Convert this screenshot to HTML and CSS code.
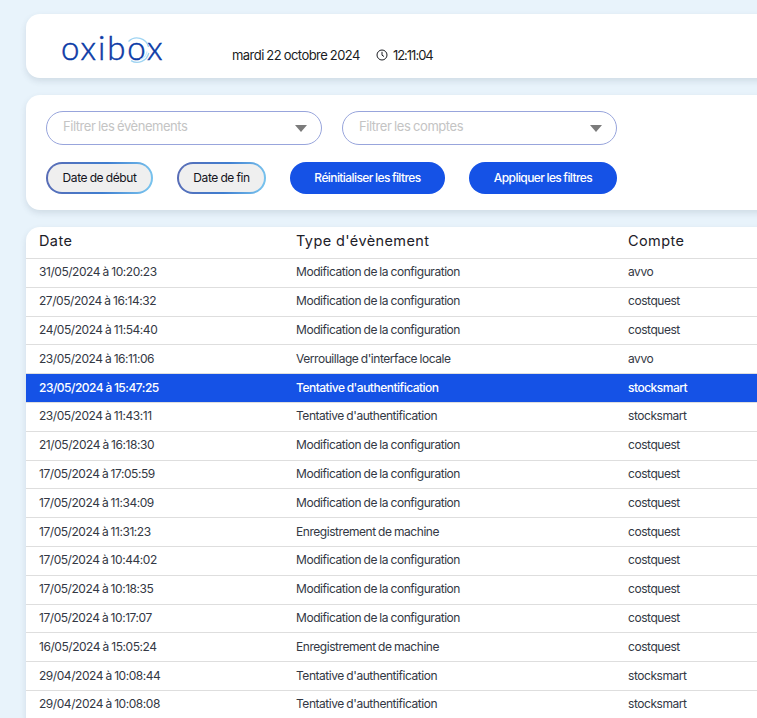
FILE: index.html
```html
<!DOCTYPE html>
<html lang="fr">
<head>
<meta charset="utf-8">
<title>Oxibox</title>
<link rel="stylesheet" href="styles.css">
</head>
<body>
<main class="page">
  <header class="card topbar">
    <div class="logo">
      <span class="logo-text">oxibox</span>
      <svg class="logo-waves" viewBox="0 0 34 34" width="34" height="34" aria-hidden="true">
        <path d="M8.500 8.500A12 12 0 0 1 28.600 14" />
        <path d="M28.800 20A12 12 0 0 1 11 27.600" />
        <path class="inner" d="M27 18.500A10 10 0 0 1 20 26.600" />
      </svg>
    </div>
    <span class="date">mardi 22 octobre 2024</span>
    <span class="time">
      <svg class="clock" viewBox="0 0 12 12" width="12" height="12" aria-hidden="true">
        <circle cx="6" cy="6" r="5" />
        <path d="M6 2.800V6.200L8 7.500" />
      </svg>
      12:11:04
    </span>
  </header>

  <section class="card filters">
    <div class="filter-row">
      <div class="select"><span>Filtrer les évènements</span><i class="caret"></i></div>
      <div class="select"><span>Filtrer les comptes</span><i class="caret"></i></div>
    </div>
    <div class="button-row">
      <button class="date-btn date-start">Date de début</button>
      <button class="date-btn date-end">Date de fin</button>
      <button class="primary reset">Réinitialiser les filtres</button>
      <button class="primary apply">Appliquer les filtres</button>
    </div>
  </section>

  <section class="card events">
    <div class="row head"><div>Date</div><div>Type d'évènement</div><div>Compte</div></div>
    <div class="row"><div>31/05/2024 à 10:20:23</div><div>Modification de la configuration</div><div>avvo</div></div>
    <div class="row"><div>27/05/2024 à 16:14:32</div><div>Modification de la configuration</div><div>costquest</div></div>
    <div class="row"><div>24/05/2024 à 11:54:40</div><div>Modification de la configuration</div><div>costquest</div></div>
    <div class="row"><div>23/05/2024 à 16:11:06</div><div>Verrouillage d'interface locale</div><div>avvo</div></div>
    <div class="row selected"><div>23/05/2024 à 15:47:25</div><div>Tentative d'authentification</div><div>stocksmart</div></div>
    <div class="row"><div>23/05/2024 à 11:43:11</div><div>Tentative d'authentification</div><div>stocksmart</div></div>
    <div class="row"><div>21/05/2024 à 16:18:30</div><div>Modification de la configuration</div><div>costquest</div></div>
    <div class="row"><div>17/05/2024 à 17:05:59</div><div>Modification de la configuration</div><div>costquest</div></div>
    <div class="row"><div>17/05/2024 à 11:34:09</div><div>Modification de la configuration</div><div>costquest</div></div>
    <div class="row"><div>17/05/2024 à 11:31:23</div><div>Enregistrement de machine</div><div>costquest</div></div>
    <div class="row"><div>17/05/2024 à 10:44:02</div><div>Modification de la configuration</div><div>costquest</div></div>
    <div class="row"><div>17/05/2024 à 10:18:35</div><div>Modification de la configuration</div><div>costquest</div></div>
    <div class="row"><div>17/05/2024 à 10:17:07</div><div>Modification de la configuration</div><div>costquest</div></div>
    <div class="row"><div>16/05/2024 à 15:05:24</div><div>Enregistrement de machine</div><div>costquest</div></div>
    <div class="row"><div>29/04/2024 à 10:08:44</div><div>Tentative d'authentification</div><div>stocksmart</div></div>
    <div class="row"><div>29/04/2024 à 10:08:08</div><div>Tentative d'authentification</div><div>stocksmart</div></div>
  </section>
</main>
</body>
</html>
```
FILE: styles.css
```css
html, body {
  margin: 0;
  height: 718px;
  overflow: hidden;
  background: #e8f3fb;
}
body {
  font-family: Inter, "Liberation Sans", sans-serif;
  color: #1f2430;
}
.page {
  width: 780px;
  padding: 14px 0 0 26px;
  display: flex;
  flex-direction: column;
  gap: 17px;
}
.card {
  background: #fff;
  border-radius: 14px;
  box-shadow: 0 3px 6px rgba(60, 80, 100, 0.14);
}
.topbar {
  height: 64px;
  display: flex;
  align-items: flex-start;
  box-sizing: border-box;
}
.logo {
  position: relative;
  margin: 13px 0 0 35px;
  width: 171px;
  height: 40px;
}
.logo-text {
  font-family: Lato, sans-serif;
  font-size: 33px;
  line-height: 40px;
  font-weight: 300;
  letter-spacing: 1.9px;
  color: #0a3aa6;
  -webkit-text-stroke: 0.5px #0a3aa6;
}
.logo-waves {
  position: absolute;
  left: 59px;
  top: 6px;
  fill: none;
  stroke: #9fd4f2;
  stroke-width: 1.3;
}
.logo-waves .inner { stroke: #cfe9f8; }
.date, .time {
  font-size: 13px;
  letter-spacing: -0.55px;
  word-spacing: -0.5px;
  line-height: 16px;
  color: #1a1c22;
  margin-top: 33px;
}
.time {
  margin-left: 16px;
  display: inline-flex;
  align-items: center;
  gap: 5px;
  letter-spacing: -1px;
}
.clock {
  fill: none;
  stroke: #1a1c22;
  stroke-width: 1;
}
.filters {
  height: 115px;
  box-sizing: border-box;
  padding: 16px 20px;
  display: flex;
  flex-direction: column;
  gap: 17px;
}
.filter-row, .button-row {
  display: flex;
  gap: 20px;
}
.select {
  width: 276px;
  height: 34px;
  box-sizing: border-box;
  border: 1px solid #98a5dc;
  border-radius: 17px;
  padding: 0 13px 0 16px;
  display: flex;
  align-items: center;
  justify-content: space-between;
  font-size: 13px;
  letter-spacing: -0.45px;
  word-spacing: -0.5px;
  color: #c4c4c4;
}
.select span { margin-top: -4px; }
.caret {
  width: 0;
  height: 0;
  border-left: 6px solid transparent;
  border-right: 6px solid transparent;
  border-top: 7px solid #7b7b7b;
  margin: 1px 1px 0 0;
}
.select + .select { width: 275px; }
button {
  font-family: inherit;
  font-size: 12px;
  letter-spacing: -0.4px;
  word-spacing: -0.5px;
  height: 32px;
  border-radius: 16px;
  cursor: pointer;
  padding: 0 0 2px;
}
.button-row { gap: 24px; }
.date-btn {
  color: #14141c;
  border: 2px solid transparent;
  background:
    linear-gradient(#efefef, #efefef) padding-box,
    linear-gradient(100deg, #5a6cb5, #3f7ed0 55%, #7cc8f0) border-box;
}
.date-start { width: 107px; }
.date-end { width: 89px; }
.primary {
  background: #1552e6;
  color: #fff;
  border: 0;
  font-weight: 500;
  letter-spacing: -0.58px;
}
.reset { width: 155px; }
.apply { width: 148px; }
.events {
  border-radius: 14px 14px 0 0;
}
.row {
  display: grid;
  grid-template-columns: 257px 332px 1fr;
  height: 28.8px;
  box-sizing: border-box;
  border-bottom: 1px solid #dedede;
  padding-bottom: 2px;
  align-items: center;
  font-size: 12px;
  letter-spacing: -0.45px;
  word-spacing: -0.5px;
  color: #333844;
}
.row > div { padding-left: 13px; }
.head {
  height: 32px;
  padding-bottom: 4px;
  font-size: 14.5px;
  font-weight: 400;
  letter-spacing: 0.4px;
  word-spacing: 0;
  color: #1c2028;
}
.selected {
  background: #1552e6;
  color: #fff;
  font-weight: 500;
  letter-spacing: -0.5px;
}
```
